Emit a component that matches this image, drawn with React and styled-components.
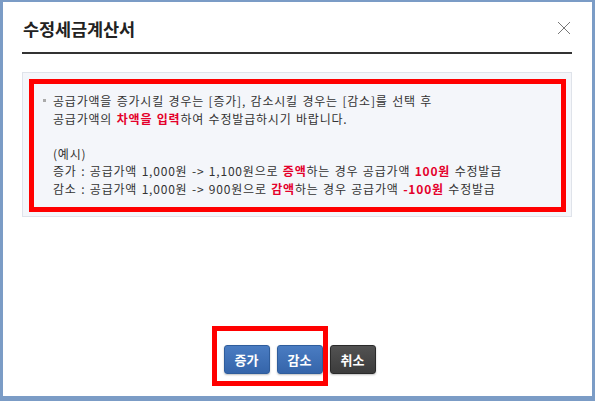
import React from "react";
import styled, { createGlobalStyle } from "styled-components";

const Global = createGlobalStyle`
  html, body { margin: 0; padding: 0; background: #fff; }
  body { font-family: "Noto Sans CJK KR", "Noto Sans", sans-serif; }
  * { box-sizing: border-box; }
`;

const Frame = styled.div`
  width: 595px;
  height: 401px;
  border-style: solid;
  border-color: #7b9cc6;
  border-width: 2px 3px 5px 3px;
  background: #fff;
  display: flex;
  flex-direction: column;
  padding: 0 20px 0 19px;
`;

const Header = styled.div`
  height: 52px;
  display: flex;
  align-items: center;
  justify-content: space-between;
  border-bottom: 2px solid #333;
  padding-top: 2px;
  padding-left: 1px;
`;

const Title = styled.h1`
  margin: 0;
  font-size: 17.5px;
  font-weight: 700;
  color: #222;
  letter-spacing: -0.1px;
`;

const Close = styled.button`
  border: 0;
  background: none;
  padding: 0;
  width: 16px;
  height: 16px;
  display: flex;
  align-items: center;
  justify-content: center;
  cursor: pointer;
`;

const InfoBox = styled.div`
  margin-top: 18px;
  border: 1px solid #dfe3ea;
  background: #f4f6fa;
  padding: 6px 5px 4px 6px;
`;

const Highlight = styled.div`
  border: 5px solid #ff0000;
  padding: 8px 10px 10px 9px;
`;

const List = styled.ul`
  margin: 0;
  padding: 0;
  list-style: none;
`;

const Item = styled.li`
  position: relative;
  padding-left: 10px;
  font-size: 12px;
  line-height: 17.5px;
  letter-spacing: 0.8px;
  word-spacing: 1px;
  color: #333;
  &::before {
    content: "";
    position: absolute;
    left: 0;
    top: 7px;
    width: 3px;
    height: 3px;
    background: #aaa;
  }
`;

const Line = styled.div`
  min-height: 17.5px;
  white-space: pre;
`;

const Em = styled.b`
  color: #e4002b;
  font-weight: 700;
`;

const Spacer = styled.div`
  flex: 1;
`;

const ButtonRow = styled.div`
  position: relative;
  display: flex;
  justify-content: center;
  gap: 7px;
  padding-bottom: 22px;
  padding-left: 5px;
`;

const Btn = styled.button`
  width: 46px;
  height: 29px;
  border-radius: 3px;
  border: 1px solid ${(p) => (p.$dark ? "#2a2a2a" : "#2f5d9c")};
  background: ${(p) =>
    p.$dark
      ? "linear-gradient(#525252, #3c3c3c)"
      : "linear-gradient(#4a7cc2, #3565aa)"};
  color: #fff;
  font-family: "Noto Sans CJK KR", sans-serif;
  font-size: 13px;
  font-weight: 700;
  padding: 0;
  box-shadow: 0 1px 2px rgba(0, 0, 0, 0.25);
  cursor: pointer;
`;

const Annotation = styled.div`
  position: absolute;
  left: 190px;
  top: -19px;
  width: 116px;
  height: 60px;
  border: 5px solid #ff0000;
  pointer-events: none;
`;

export default function App() {
  return (
    <>
      <Global />
      <Frame>
        <Header>
          <Title>수정세금계산서</Title>
          <Close aria-label="닫기">
            <svg width="14" height="14" viewBox="0 0 14 14">
              <path d="M1 1L13 13M13 1L1 13" stroke="#777" strokeWidth="1" fill="none" />
            </svg>
          </Close>
        </Header>
        <InfoBox>
          <Highlight>
            <List>
              <Item>
                <Line>공급가액을 증가시킬 경우는 [증가], 감소시킬 경우는 [감소]를 선택 후</Line>
                <Line>
                  공급가액의 <Em>차액을 입력</Em>하여 수정발급하시기 바랍니다.
                </Line>
                <Line> </Line>
                <Line>(예시)</Line>
                <Line>
                  증가 : 공급가액 1,000원 -&gt; 1,100원으로 <Em>증액</Em>하는 경우 공급가액 <Em>100원</Em> 수정발급
                </Line>
                <Line>
                  감소 : 공급가액 1,000원 -&gt; 900원으로 <Em>감액</Em>하는 경우 공급가액 <Em>-100원</Em> 수정발급
                </Line>
              </Item>
            </List>
          </Highlight>
        </InfoBox>
        <Spacer />
        <ButtonRow>
          <Btn>증가</Btn>
          <Btn>감소</Btn>
          <Btn $dark>취소</Btn>
          <Annotation />
        </ButtonRow>
      </Frame>
    </>
  );
}
